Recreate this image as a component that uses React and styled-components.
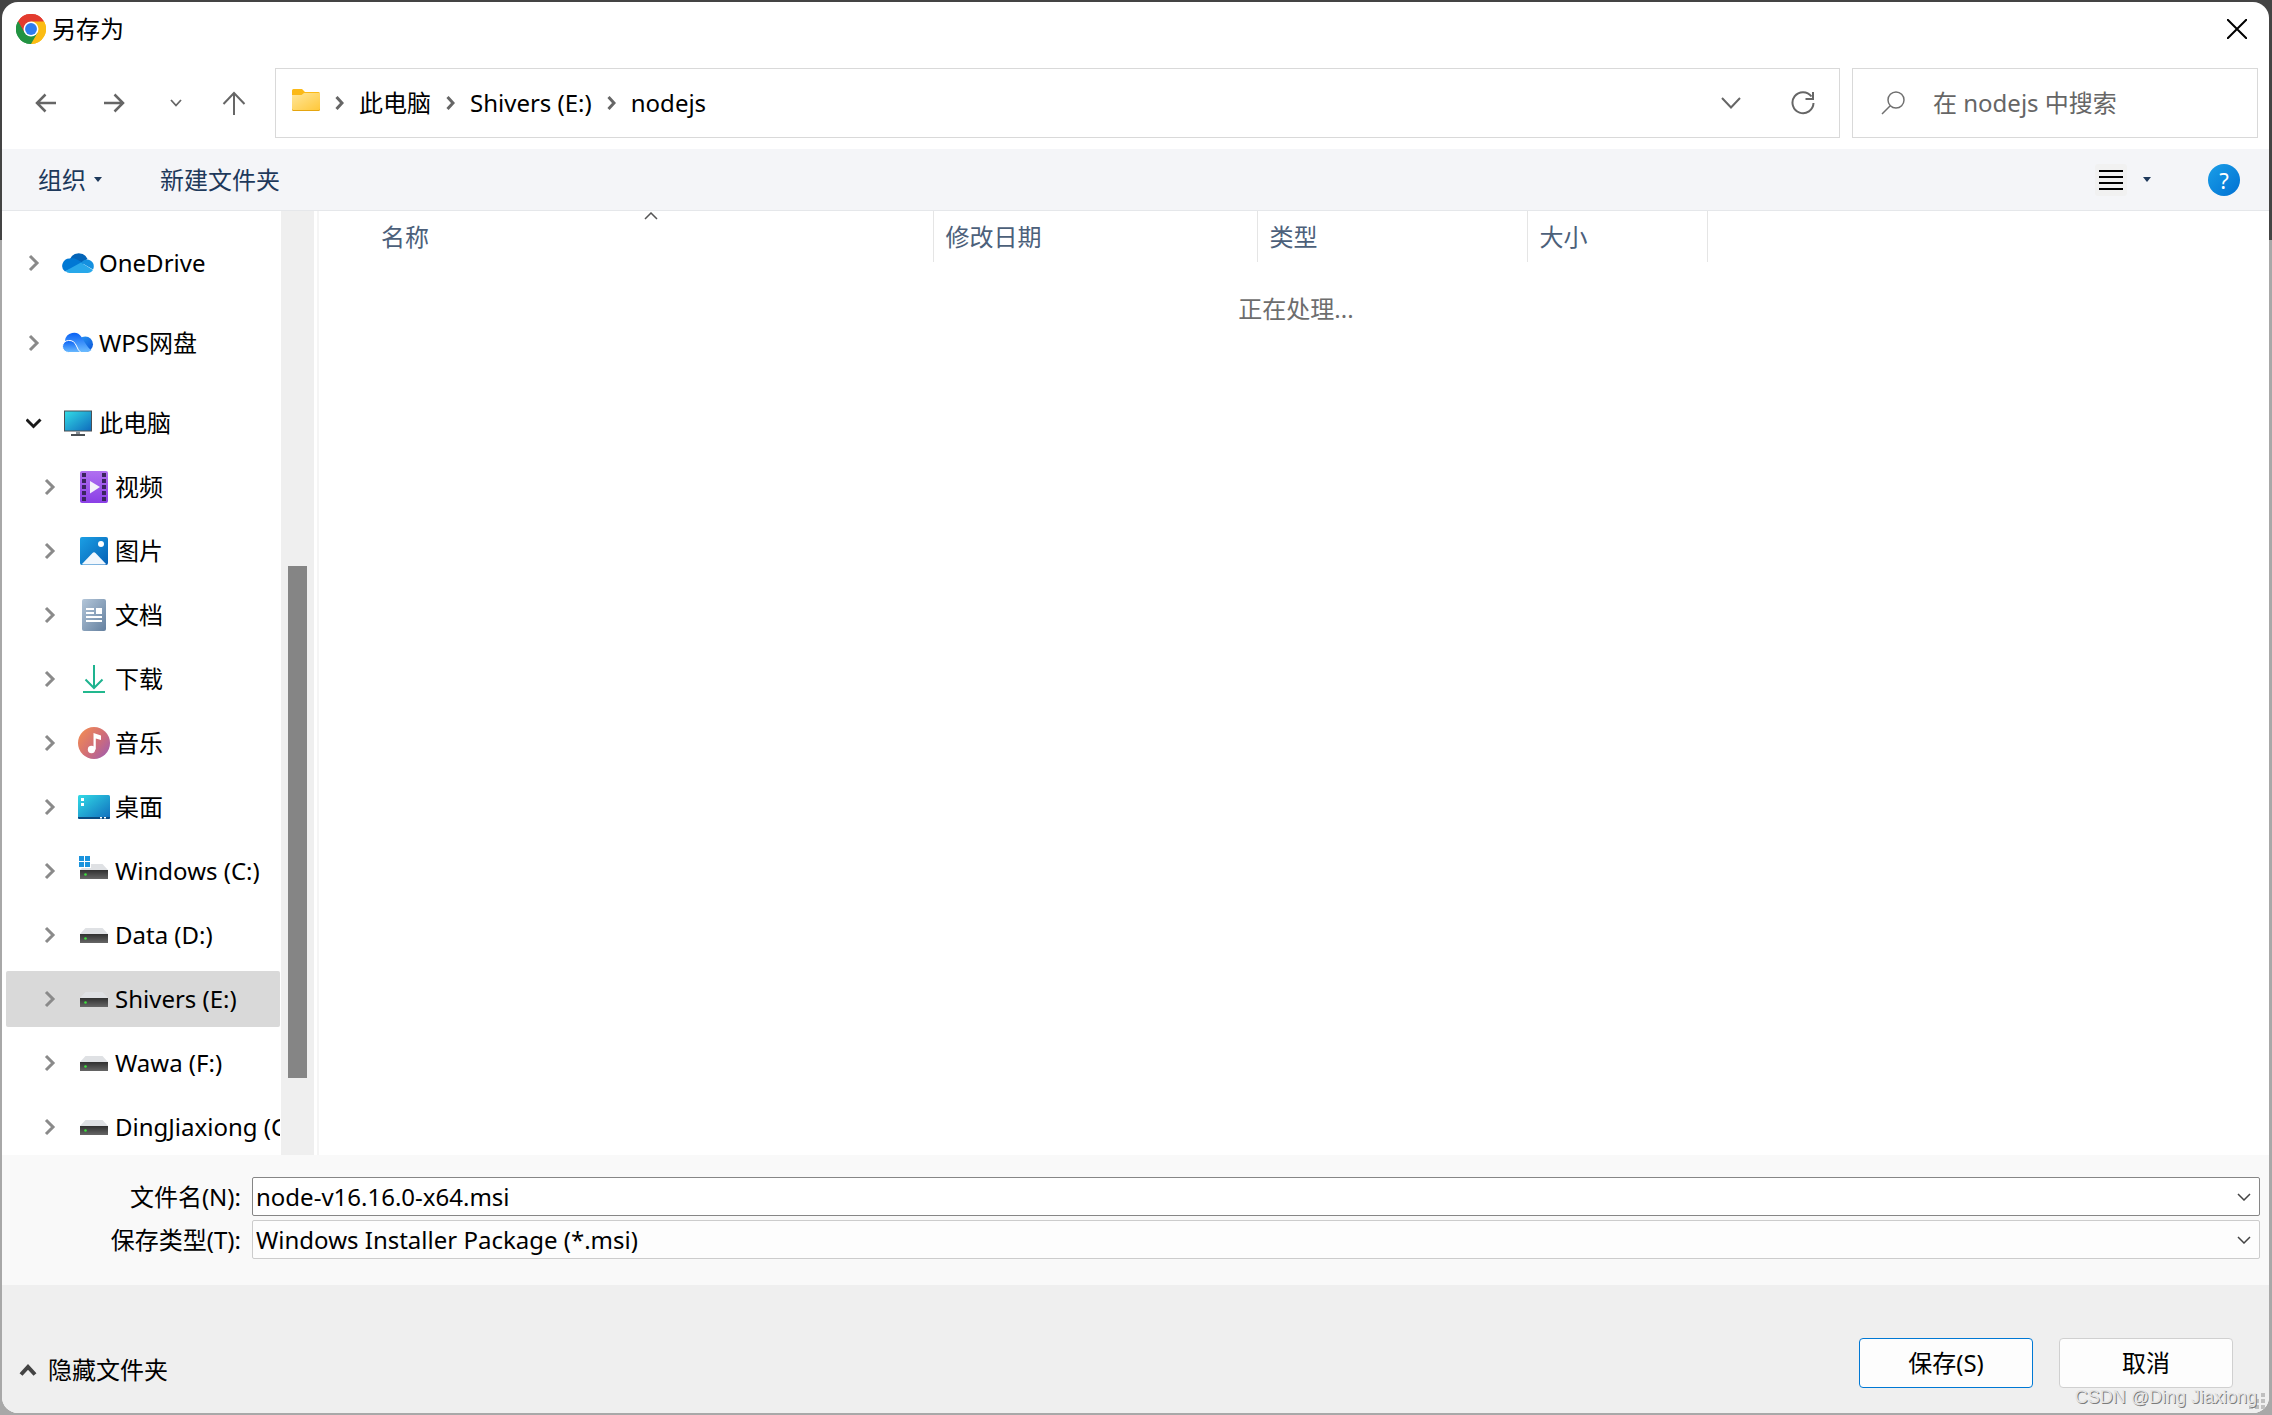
import { useState } from "react";
import styled, { createGlobalStyle, css } from "styled-components";

const FONT = `"Noto Sans", "Noto Sans CJK SC", sans-serif`;

const GlobalStyle = createGlobalStyle`
  *,
  *::before,
  *::after {
    box-sizing: border-box;
  }

  body {
    margin: 0;
    color: #000;
    background: #b0b0b0;
    font-family: ${FONT};
    font-size: 24px;
    line-height: 32px;
  }

  button,
  input,
  select {
    margin: 0;
    padding: 0;
    border: 0;
    background: none;
    color: inherit;
    font: inherit;
  }

  svg {
    display: block;
    flex: none;
  }
`;

const Desktop = styled.div`
  min-height: 100vh;
  display: flex;
  padding: 2px 3px 2px 2px;
  background: linear-gradient(#444 240px, #a8a8a8 240px);
`;

const Dialog = styled.main`
  flex: 1;
  min-width: 0;
  display: flex;
  flex-direction: column;
  background: #fff;
  border-radius: 16px;
  overflow: hidden;
  position: relative;
`;

const TitleBar = styled.header`
  height: 54px;
  display: flex;
  align-items: center;
  gap: 6px;
  padding: 0 22px 0 14px;
`;

const Title = styled.h1`
  flex: 1;
  margin: 0;
  font-size: 24px;
  font-weight: 400;
`;

const IconButton = styled.button`
  display: flex;
  align-items: center;
  justify-content: center;
  width: ${p => p.$width || 24}px;
  height: 32px;
  color: ${p => p.$color || "#666"};
`;

const NavBar = styled.nav`
  display: flex;
  align-items: center;
  gap: 12px;
  padding: 12px 11px 11px 32px;
`;

const NavButtons = styled.div`
  display: flex;
  gap: 34px;
  width: 229px;
`;

const AddressBar = styled.div`
  flex: 1;
  height: 70px;
  display: flex;
  align-items: center;
  padding: 0 24px 0 16px;
  border: 1px solid #d9d9d9;
`;

const Crumbs = styled.ol`
  flex: 1;
  display: flex;
  align-items: center;
  margin: 0;
  padding: 0 0 0 15px;
  list-style: none;
`;

const Crumb = styled.li`
  display: flex;
  align-items: center;
  gap: 15px;
  margin-right: 15px;
`;

const CrumbLink = styled.a`
  color: #000;
  text-decoration: none;
`;

const AddressActions = styled.div`
  display: flex;
  gap: 48px;
`;

const SearchBox = styled.label`
  width: 406px;
  height: 70px;
  display: flex;
  align-items: center;
  gap: 28px;
  padding: 0 28px;
  border: 1px solid #d9d9d9;
`;

const SearchInput = styled.input`
  flex: 1;
  min-width: 0;
  outline: none;

  &::placeholder {
    color: #666;
    opacity: 1;
  }
`;

const Toolbar = styled.div`
  height: 62px;
  display: flex;
  align-items: center;
  padding: 0 29px 0 36px;
  background: #f4f5f8;
  border-bottom: 1px solid #e5e7ea;
`;

const ToolbarButton = styled.button`
  display: flex;
  align-items: center;
  gap: 8px;
  margin-right: 58px;
  color: #1e395b;
`;

const ToolbarRight = styled.div`
  display: flex;
  align-items: center;
  margin-left: auto;
`;

const ViewButton = styled.button`
  display: flex;
  align-items: center;
  gap: 16px;
  margin-right: 57px;
  color: #1e395b;
`;

const ViewIcon = styled.span`
  width: 32px;
  height: 32px;
  display: flex;
  align-items: center;
  justify-content: center;
  border-radius: 3px;
  background: #f1f1f1;
`;

const HelpButton = styled.button`
  width: 32px;
  height: 32px;
  border-radius: 50%;
  background: linear-gradient(135deg, #1a9fe8, #0070d2);
  color: #fff;
  font-size: 22px;
  line-height: 32px;
`;

const Body = styled.div`
  flex: 1;
  min-height: 0;
  display: flex;
`;

const Sidebar = styled.aside`
  width: 279px;
  height: 944px;
  padding: 24px 1px 0 4px;
  overflow: hidden;
`;

const Tree = styled.ul`
  margin: 0;
  padding: 0;
  list-style: none;
`;

const TreeItem = styled.li`
  margin-bottom: ${p => (p.$spaced ? 24 : 8)}px;
`;

const TreeRow = styled.button`
  width: 100%;
  height: 56px;
  display: flex;
  align-items: center;
  overflow: hidden;
  padding-left: ${p => (p.$nested ? 36 : 20)}px;
  border-radius: 2px;
  text-align: left;
  white-space: nowrap;
  ${p =>
    p.$selected &&
    css`
      background: #d9d9d9;
    `}
`;

const TreeIcon = styled.span`
  display: flex;
  margin: 0 5px 0 20px;
`;

const ScrollTrack = styled.div`
  width: 33px;
  padding: 355px 7px 0;
  background: #efefef;
`;

const ScrollThumb = styled.div`
  height: 512px;
  background: #858585;
`;

const FilePane = styled.section`
  flex: 1;
  min-width: 0;
  margin-left: 3px;
  border-left: 2px solid #f5f5f5;
`;

const FileTable = styled.table`
  table-layout: fixed;
  width: 1338px;
  margin-left: 50px;
  border-collapse: collapse;
`;

const ColumnHead = styled.th`
  position: relative;
  width: ${p => p.$width}px;
  height: 51px;
  padding: 0 12px;
  border-right: 1px solid #e5e5e5;
  color: #4c607a;
  font-weight: 400;
  text-align: left;
`;

const SortMark = styled.span`
  position: absolute;
  top: 1px;
  left: calc(50% - 7px);
`;

const Status = styled.p`
  margin: 0;
  padding: 31px 0 31px 4px;
  color: #6d6d6d;
  text-align: center;
`;

const FileForm = styled.form`
  display: grid;
  grid-template-columns: 239px 1fr;
  align-items: center;
  gap: 4px 11px;
  padding: 22px 9px 26px 0;
  background: #f9f9f9;
`;

const FieldLabel = styled.label`
  text-align: right;
`;

const Field = styled.div`
  height: 39px;
  display: flex;
  align-items: center;
  padding-right: 8px;
  border: 1px solid ${p => (p.$muted ? "#cccccc" : "#868686")};
  border-radius: 2px;
  background: ${p => (p.$muted ? "#fdfdfd" : "#fff")};
`;

const TextInput = styled.input`
  flex: 1;
  min-width: 0;
  height: 32px;
  padding-left: 3px;
  outline: none;
`;

const TypeSelect = styled.select`
  flex: 1;
  min-width: 0;
  height: 32px;
  padding-left: 3px;
  appearance: none;
  outline: none;
`;

const Footer = styled.footer`
  height: 128px;
  display: flex;
  align-items: center;
  gap: 26px;
  padding: 28px 36px 0 16px;
  background: #efefef;
`;

const FolderToggle = styled.button`
  display: flex;
  align-items: center;
  gap: 10px;
  margin: 14px auto 0 0;
`;

const ActionButton = styled.button`
  width: 174px;
  height: 50px;
  border: 1px solid ${p => (p.$primary ? "#0078d4" : "#d0d0d0")};
  border-radius: 4px;
  background: #fdfdfd;
`;

const ResizeGrip = styled.span`
  position: absolute;
  right: 4px;
  bottom: 4px;
`;

const Watermark = styled.span`
  position: absolute;
  right: 12px;
  bottom: 4px;
  color: #e4e4e4;
  font-family: "Liberation Sans", sans-serif;
  font-size: 18px;
  line-height: 24px;
  text-shadow: 1px 1px 0 #7c7c7c;
`;

const Stroke = ({ width, height, d, weight = 2, ...rest }) => (
  <svg
    width={width}
    height={height}
    viewBox={`0 0 ${width} ${height}`}
    fill="none"
    stroke="currentColor"
    strokeWidth={weight}
    aria-hidden="true"
    {...rest}
  >
    <path d={d} />
  </svg>
);

const ChevronRight = ({ color = "#8a8a8a" }) => (
  <Stroke width={16} height={18} weight={3} color={color} d="M4 2l7 7-7 7" />
);

const ChevronDown = () => (
  <Stroke width={16} height={18} weight={3} color="#1a1a1a" d="M0.500 5.500l7 7 7-7" />
);

const CrumbChevron = () => (
  <Stroke width={9} height={14} weight={3} color="#666" d="M1.500 1l5.500 6-5.500 6" />
);

const FieldChevron = () => <Stroke width={14} height={8} weight={1.5} color="#444" d="M1 1l6 6 6-6" />;

const Triangle = () => (
  <svg width="8" height="5" viewBox="0 0 8 5" fill="currentColor" aria-hidden="true">
    <path d="M0 0h8L4 5z" />
  </svg>
);

const ChromeIcon = () => (
  <svg width="30" height="30" viewBox="0 0 48 48" aria-hidden="true">
    <path fill="#e33b2e" d="M24 24L3.200 12A24 24 0 0 1 44.800 12z" />
    <path fill="#fbbc13" d="M24 24l20.800-12A24 24 0 0 1 24 48z" />
    <path fill="#229342" d="M24 24L24 48A24 24 0 0 1 3.200 12z" />
    <path fill="#e33b2e" d="M24 12h20.800A24 24 0 0 0 3.200 12l10.400 18z" />
    <path fill="#fbbc13" d="M34.400 30L24 48A24 24 0 0 0 44.800 12H24z" />
    <path fill="#229342" d="M13.600 30L3.200 12A24 24 0 0 0 24 48l10.400-18z" />
    <circle cx="24" cy="24" r="12" fill="#fff" />
    <circle cx="24" cy="24" r="9.500" fill="#2f7cee" />
  </svg>
);

const FolderIcon = () => (
  <svg width="28" height="28" viewBox="0 0 28 28" aria-hidden="true">
    <defs>
      <linearGradient id="folder" x1="0" y1="0" x2="1" y2="1">
        <stop offset="0" stopColor="#ffe69a" />
        <stop offset="1" stopColor="#ffc83a" />
      </linearGradient>
    </defs>
    <path fill="#fbb917" d="M0 1.500Q0 0 1.500 0h8.500l3 3H26.500Q28 3 28 4.500V9H0z" />
    <path fill="#e5a50f" d="M0 19h28v1.500q0 1.500-1.500 1.500h-25Q0 22 0 20.500z" />
    <path fill="url(#folder)" d="M0 6h9.500l2.500-2H28V19.500q0 1.500-1.500 1.500h-25Q0 21 0 19.500z" />
  </svg>
);

const OneDriveIcon = () => (
  <svg width="32" height="32" viewBox="0 0 32 32" aria-hidden="true">
    <path fill="#0364b8" d="M8 12a9.500 9.500 0 0 1 17.500 0L18 17z" />
    <path fill="#0078d4" d="M8 11.500q3.500-1 7 1l7 4L3 24.500A7.300 7.300 0 0 1 8 11.500z" />
    <path fill="#1490df" d="M25 12.500a6.800 6.800 0 0 1 6 10l-12-7q3-3 6-3z" />
    <path fill="#28a8ea" d="M3.500 24L19 15.500l12 7.500q-2 3-5.500 3H7.500q-2.500 0-4-2z" />
  </svg>
);

const WpsIcon = () => (
  <svg width="32" height="32" viewBox="0 0 32 32" aria-hidden="true">
    <defs>
      <linearGradient id="wps" x1="0" y1="0" x2="0" y2="1">
        <stop offset="0" stopColor="#0a62f5" />
        <stop offset="1" stopColor="#6cbcff" />
      </linearGradient>
      <linearGradient id="wpsRight" x1="0" y1="0" x2="1" y2="1">
        <stop offset="0" stopColor="#2b9cf5" />
        <stop offset="1" stopColor="#0a52d8" />
      </linearGradient>
    </defs>
    <circle cx="23.300" cy="17.300" r="7.700" fill="url(#wpsRight)" />
    <path fill="url(#wps)" d="M3 13.500a9 9 0 0 1 16.500-3.500q2 3.500 5 8t5 5q-2 2-5 2H14z" />
    <path
      fill="url(#wps)"
      stroke="#fff"
      d="M6.500 25.500A6 6 0 0 1 6.500 13.500q5.500-.5 8 5.500 1.500 4.500 4.500 6.500z"
    />
  </svg>
);

const PcIcon = () => (
  <svg width="32" height="32" viewBox="0 0 32 32" aria-hidden="true">
    <defs>
      <linearGradient id="screen" x1="0" y1="0" x2="1" y2="1">
        <stop offset="0" stopColor="#32dbe6" />
        <stop offset="1" stopColor="#0f6cbd" />
      </linearGradient>
    </defs>
    <path fill="#4a4f54" d="M2 3.500h28v21H2z" />
    <path fill="url(#screen)" d="M3 4.500h26v19H3z" />
    <path fill="#8a9096" d="M14 24.500h4v3h-4z" />
    <path fill="#4a4f54" d="M9 27h14v2H9z" />
  </svg>
);

const VideoIcon = () => (
  <svg width="32" height="32" viewBox="0 0 32 32" aria-hidden="true">
    <defs>
      <linearGradient id="video" x1="0" y1="0" x2="0" y2="1">
        <stop offset="0" stopColor="#b070f0" />
        <stop offset="1" stopColor="#8a3fe6" />
      </linearGradient>
    </defs>
    <rect x="2" width="28" height="32" rx="2" fill="url(#video)" />
    {[2, 8, 14, 20, 26].map(y => (
      <path key={y} fill="#3b2460" d={`M4 ${y}h4v4H4zM24 ${y}h4v4h-4z`} />
    ))}
    <path fill="#f4f0fa" d="M12 10l10 6-10 6.500z" />
  </svg>
);

const PictureIcon = () => (
  <svg width="32" height="32" viewBox="0 0 32 32" aria-hidden="true">
    <defs>
      <linearGradient id="picture" x1="0" y1="0" x2="1" y2="1">
        <stop offset="0" stopColor="#1b9fe4" />
        <stop offset="1" stopColor="#0560b5" />
      </linearGradient>
    </defs>
    <rect x="2" y="2" width="28" height="28" rx="2" fill="url(#picture)" />
    <path fill="#f1f7fd" d="M4 29L14.500 18q1.500-1.500 3 0L28 29q-.5.500-1.500.500h-21Q4.500 29.500 4 29z" />
    <circle cx="23" cy="9" r="3" fill="#fff" />
  </svg>
);

const DocumentIcon = () => (
  <svg width="32" height="32" viewBox="0 0 32 32" aria-hidden="true">
    <defs>
      <linearGradient id="document" x1="0" y1="0" x2="1" y2="1">
        <stop offset="0" stopColor="#b3c6d9" />
        <stop offset="1" stopColor="#64809f" />
      </linearGradient>
    </defs>
    <rect x="4" width="24" height="32" rx="2" fill="url(#document)" />
    <path fill="#fff" d="M8 9h8v2H8zM8 13h8v2H8zM18 9h6v6h-6zM8 17h16v2H8zM8 21h16v2H8z" />
  </svg>
);

const DownloadIcon = () => (
  <svg width="32" height="32" viewBox="0 0 32 32" fill="none" strokeWidth="2" aria-hidden="true">
    <path stroke="#1eb38f" d="M16 2v23M7.500 16.500l8.500 8.500 8.500-8.500" />
    <path stroke="#22b88e" d="M5 29h22" />
  </svg>
);

const MusicIcon = () => (
  <svg width="32" height="32" viewBox="0 0 32 32" aria-hidden="true">
    <defs>
      <linearGradient id="music" x1="0" y1="0.200" x2="1" y2="1">
        <stop offset="0" stopColor="#f08a55" />
        <stop offset="0.500" stopColor="#d06d78" />
        <stop offset="1" stopColor="#9a5bb5" />
      </linearGradient>
    </defs>
    <circle cx="16" cy="16" r="16" fill="url(#music)" />
    <circle cx="13.500" cy="22.500" r="3.700" fill="#fff" />
    <path fill="#fff" d="M15.500 6l7.500 2.500V13l-5.200-1.500v11h-2.300z" />
  </svg>
);

const DesktopIcon = () => (
  <svg width="32" height="32" viewBox="0 0 32 32" aria-hidden="true">
    <rect y="4" width="32" height="24" rx="1.500" fill="url(#screen)" />
    <path fill="#0b4a80" d="M0 26h32v.500q0 1.500-1.500 1.500h-29Q0 28 0 26.500z" />
    <path fill="#fff" d="M3 7h3v3H3zM3 12h3v3H3zM22 26h2v1.500h-2zM26 26h2v1.500h-2z" />
  </svg>
);

const DriveIcon = ({ system }) => (
  <svg width="32" height="32" viewBox="0 0 32 32" aria-hidden="true">
    <defs>
      <linearGradient id="drive" x1="0" y1="0" x2="0" y2="1">
        <stop offset="0" stopColor="#303030" />
        <stop offset="1" stopColor="#666" />
      </linearGradient>
    </defs>
    <path fill="#dfe1e4" d="M7.500 9h17l5.500 6H2z" />
    <path fill="url(#drive)" d="M2 15h28v9H2z" />
    <circle cx="7.500" cy="19.500" r="1.300" fill="#3ce03c" />
    {system && (
      <>
        <path fill="#fff" d="M0 0h13v13H0z" />
        <path fill="#1a93dd" d="M1 1h5v5H1zM7 1h5v5H7zM1 7h5v5H1zM7 7h5v5H7z" />
      </>
    )}
  </svg>
);

const roots = [
  { name: "OneDrive", Icon: OneDriveIcon },
  { name: "WPS网盘", Icon: WpsIcon },
  { name: "此电脑", Icon: PcIcon, open: true },
];

const places = [
  { name: "视频", Icon: VideoIcon },
  { name: "图片", Icon: PictureIcon },
  { name: "文档", Icon: DocumentIcon },
  { name: "下载", Icon: DownloadIcon },
  { name: "音乐", Icon: MusicIcon },
  { name: "桌面", Icon: DesktopIcon },
  { name: "Windows (C:)", Icon: DriveIcon, system: true },
  { name: "Data (D:)", Icon: DriveIcon },
  { name: "Shivers (E:)", Icon: DriveIcon },
  { name: "Wawa (F:)", Icon: DriveIcon },
  { name: "DingJiaxiong (G:)", Icon: DriveIcon },
];

const crumbs = ["此电脑", "Shivers (E:)", "nodejs"];

const columns = [
  { label: "名称", width: 564, sorted: true },
  { label: "修改日期", width: 324 },
  { label: "类型", width: 270 },
  { label: "大小", width: 180 },
];

const Navigation = () => (
  <NavBar>
    <NavButtons>
      <IconButton aria-label="后退">
        <Stroke width={22} height={20} weight={2.5} d="M21 10H2M10.500 1.500L2 10l8.500 8.500" />
      </IconButton>
      <IconButton aria-label="前进" $width={44}>
        <Stroke width={22} height={20} weight={2.5} d="M1 10h19M11.500 1.500L20 10l-8.500 8.500" />
      </IconButton>
      <IconButton aria-label="最近的位置" $width={12}>
        <Stroke width={12} height={8} weight={1.8} d="M1 1l5 5.500L11 1" />
      </IconButton>
      <IconButton aria-label="上移" $width={36}>
        <Stroke width={24} height={24} d="M12 24V2M1.500 13L12 2l10.500 11" />
      </IconButton>
    </NavButtons>
    <AddressBar>
      <FolderIcon />
      <Crumbs>
        {crumbs.map(crumb => (
          <Crumb key={crumb}>
            <CrumbChevron />
            <CrumbLink href="#">{crumb}</CrumbLink>
          </Crumb>
        ))}
      </Crumbs>
      <AddressActions>
        <IconButton aria-label="展开地址">
          <Stroke width={20} height={12} d="M1 1l9 9.500L19 1" />
        </IconButton>
        <IconButton aria-label="刷新">
          <Stroke width={24} height={24} d="M20.500 5.500A10.500 10.500 0 1 0 22.500 12M22 1v7h-7.500" />
        </IconButton>
      </AddressActions>
    </AddressBar>
    <SearchBox>
      <Stroke width={24} height={24} weight={1.5} color="#707070" d="M1 23l8.500-8.500M23 9a8 8 0 1 1-16 0a8 8 0 0 1 16 0z" />
      <SearchInput aria-label="搜索" placeholder="在 nodejs 中搜索" />
    </SearchBox>
  </NavBar>
);

const Commands = () => (
  <Toolbar>
    <ToolbarButton>
      组织
      <Triangle />
    </ToolbarButton>
    <ToolbarButton>新建文件夹</ToolbarButton>
    <ToolbarRight>
      <ViewButton aria-label="更改视图">
        <ViewIcon>
          <Stroke width={24} height={20} color="#000" d="M0 1h24M0 7h24M0 13h24M0 19h24" />
        </ViewIcon>
        <Triangle />
      </ViewButton>
      <HelpButton aria-label="帮助">?</HelpButton>
    </ToolbarRight>
  </Toolbar>
);

const FolderTree = () => {
  const [selected, setSelected] = useState("Shivers (E:)");

  return (
    <Sidebar>
      <Tree>
        {roots.map(({ name, Icon, open }) => (
          <TreeItem key={name} $spaced={!open}>
            <TreeRow $selected={selected === name} onClick={() => setSelected(name)}>
              {open ? <ChevronDown /> : <ChevronRight />}
              <TreeIcon>
                <Icon />
              </TreeIcon>
              {name}
            </TreeRow>
          </TreeItem>
        ))}
        {places.map(({ name, Icon, system }) => (
          <TreeItem key={name}>
            <TreeRow $nested $selected={selected === name} onClick={() => setSelected(name)}>
              <ChevronRight />
              <TreeIcon>
                <Icon system={system} />
              </TreeIcon>
              {name}
            </TreeRow>
          </TreeItem>
        ))}
      </Tree>
    </Sidebar>
  );
};

const Files = () => (
  <FilePane>
    <FileTable>
      <thead>
        <tr>
          {columns.map(({ label, width, sorted }) => (
            <ColumnHead key={label} $width={width} scope="col">
              {sorted && (
                <SortMark>
                  <Stroke width={14} height={8} weight={1.5} color="#555" d="M1 7l6-6 6 6" />
                </SortMark>
              )}
              {label}
            </ColumnHead>
          ))}
        </tr>
      </thead>
    </FileTable>
    <Status>正在处理...</Status>
  </FilePane>
);

const SaveForm = () => {
  const [fileName, setFileName] = useState("node-v16.16.0-x64.msi");

  return (
    <FileForm id="save" onSubmit={e => e.preventDefault()}>
      <FieldLabel htmlFor="file-name">文件名(N):</FieldLabel>
      <Field>
        <TextInput id="file-name" value={fileName} onChange={e => setFileName(e.target.value)} />
        <FieldChevron />
      </Field>
      <FieldLabel htmlFor="file-type">保存类型(T):</FieldLabel>
      <Field $muted>
        <TypeSelect id="file-type">
          <option>Windows Installer Package (*.msi)</option>
        </TypeSelect>
        <FieldChevron />
      </Field>
    </FileForm>
  );
};

const App = () => (
  <>
    <GlobalStyle />
    <Desktop>
      <Dialog>
        <TitleBar>
          <ChromeIcon />
          <Title>另存为</Title>
          <IconButton aria-label="关闭" $width={20} $color="#000">
            <Stroke width={20} height={20} d="M0 0l20 20M20 0L0 20" />
          </IconButton>
        </TitleBar>
        <Navigation />
        <Commands />
        <Body>
          <FolderTree />
          <ScrollTrack>
            <ScrollThumb />
          </ScrollTrack>
          <Files />
        </Body>
        <SaveForm />
        <Footer>
          <FolderToggle>
            <Stroke width={20} height={12} weight={4} color="#444" d="M3 10.500l7-7.500 7 7.500" />
            隐藏文件夹
          </FolderToggle>
          <ActionButton $primary type="submit" form="save">
            保存(S)
          </ActionButton>
          <ActionButton>取消</ActionButton>
        </Footer>
        <ResizeGrip>
          <svg width="16" height="16" viewBox="0 0 16 16" fill="#bfbfbf" aria-hidden="true">
            <path d="M12 0h4v4h-4zM6 6h4v4H6zM12 6h4v4h-4zM0 12h4v4H0zM6 12h4v4H6zM12 12h4v4h-4z" />
          </svg>
        </ResizeGrip>
        <Watermark>CSDN @Ding Jiaxiong</Watermark>
      </Dialog>
    </Desktop>
  </>
);

export default App;
